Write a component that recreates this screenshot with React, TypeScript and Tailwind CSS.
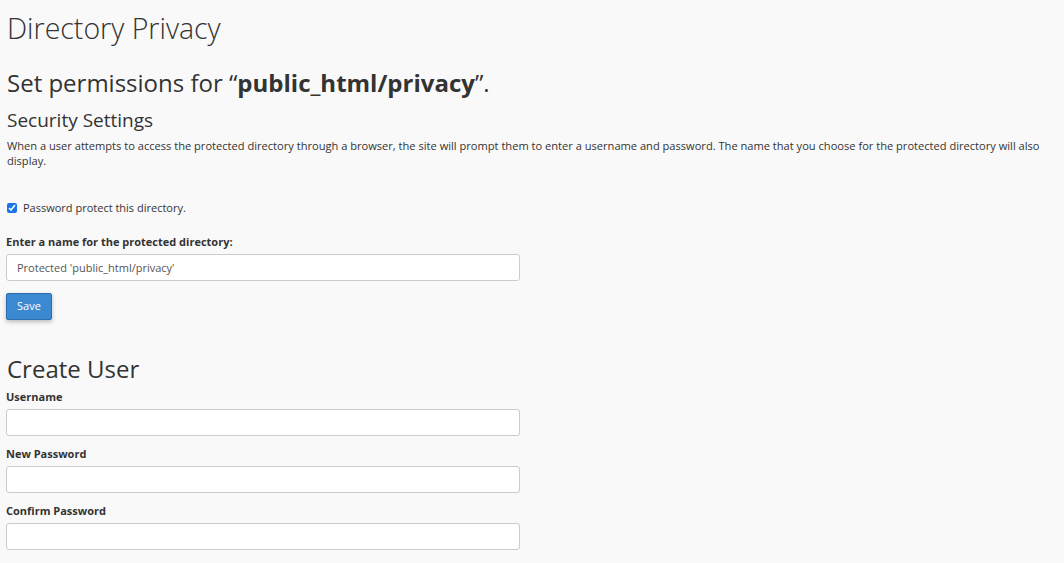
import React from "react";

function Field({ label, value = "" }: { label: string; value?: string }) {
  return (
    <div className="mb-[10px] w-[514px]">
      <label className="block text-[11px] font-bold leading-[15px] mb-[5px]">{label}</label>
      <input
        type="text"
        defaultValue={value}
        className="block w-full h-[27px] px-[10px] bg-white border border-[#cccccc] rounded-[3px] text-[11px] text-[#555555] outline-none"
      />
    </div>
  );
}

export default function App() {
  return (
    <div
      className="min-h-[563px] bg-[#f9f9f9] text-[#333333] px-[6px] pt-[9px]"
      style={{ fontFamily: "'Open Sans', 'Liberation Sans', sans-serif" }}
    >
      <h1 className="text-[28.5px] font-light leading-[38px] ml-[1px]">Directory Privacy</h1>
      <h2 className="text-[24px] leading-[32px] mt-[20px] ml-[1px]">
        Set permissions for “<strong className="font-bold">public_html/privacy</strong>”.
      </h2>
      <h3 className="text-[19px] leading-[26px] mt-[8px] ml-[1px]">Security Settings</h3>
      <p className="text-[11.1px] leading-[15px] mt-[5px] ml-[1px] pr-[14px]">
        When a user attempts to access the protected directory through a browser, the site will prompt them to enter a
        username and password. The name that you choose for the protected directory will also display.
      </p>

      <label className="flex items-center gap-[6px] mt-[32px] ml-[1px] text-[11px] leading-[15px]">
        <input type="checkbox" defaultChecked className="w-[10px] h-[10px] m-0 accent-[#1a73e8]" />
        Password protect this directory.
      </label>

      <div className="mt-[19px]">
        <Field label="Enter a name for the protected directory:" value="Protected 'public_html/privacy'" />
      </div>
      <button className="block mt-[12px] h-[27px] px-[10px] bg-[#3a89d1] border border-[#2c6fb0] rounded-[2px] text-white text-[11px] shadow-[0_2px_4px_rgba(0,0,0,0.25)]">
        Save
      </button>

      <h2 className="text-[24px] leading-[32px] mt-[33px] ml-[1px]">Create User</h2>
      <div className="mt-[4px]">
        <Field label="Username" />
        <Field label="New Password" />
        <Field label="Confirm Password" />
      </div>
    </div>
  );
}
